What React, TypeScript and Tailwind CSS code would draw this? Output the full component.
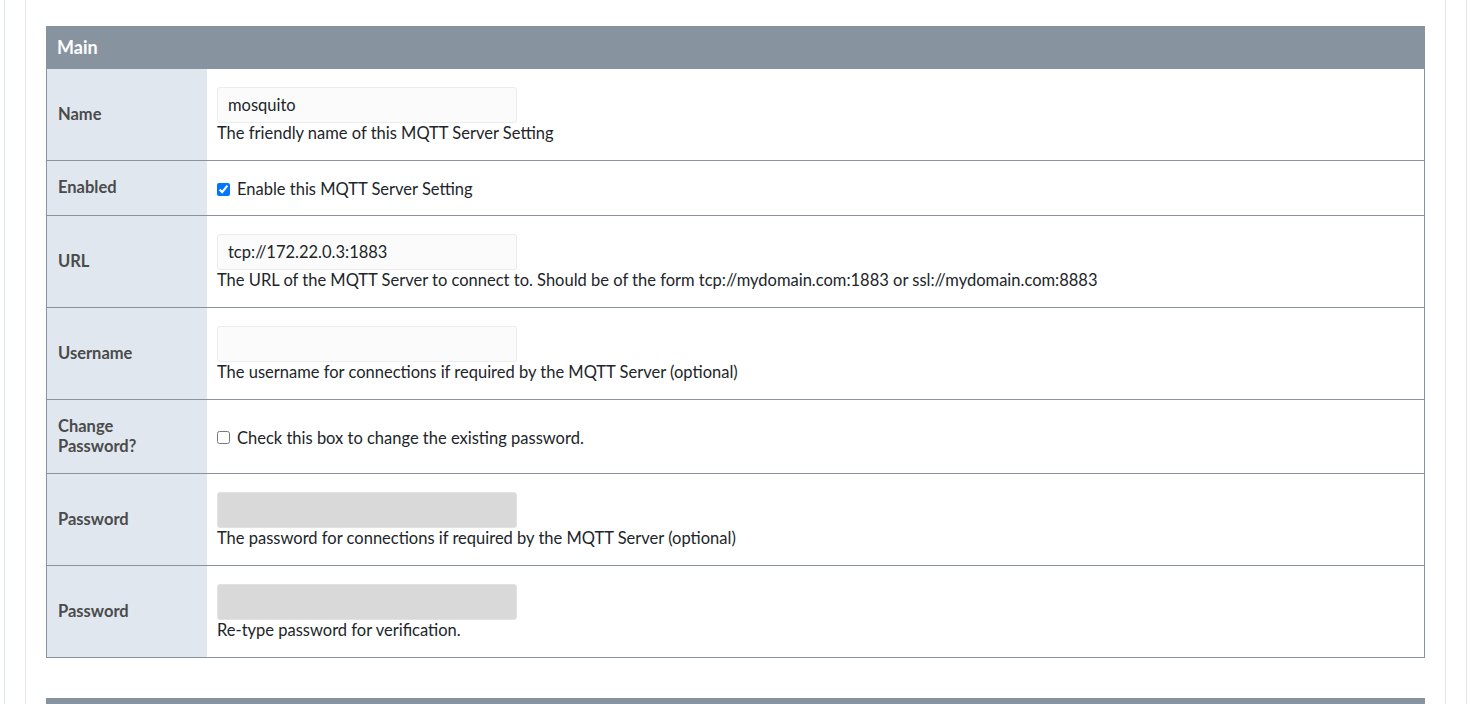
import React from "react";

type Row = {
  label: React.ReactNode;
  kind: "text" | "check" | "disabled";
  value?: string;
  help: string;
  checked?: boolean;
};

const rows: Row[] = [
  { label: "Name", kind: "text", value: "mosquito", help: "The friendly name of this MQTT Server Setting" },
  { label: "Enabled", kind: "check", checked: true, help: "Enable this MQTT Server Setting" },
  {
    label: "URL",
    kind: "text",
    value: "tcp://172.22.0.3:1883",
    help: "The URL of the MQTT Server to connect to. Should be of the form tcp://mydomain.com:1883 or ssl://mydomain.com:8883",
  },
  { label: "Username", kind: "text", value: "", help: "The username for connections if required by the MQTT Server (optional)" },
  { label: "Change Password?", kind: "check", checked: false, help: "Check this box to change the existing password." },
  { label: "Password", kind: "disabled", help: "The password for connections if required by the MQTT Server (optional)" },
  { label: "Password", kind: "disabled", help: "Re-type password for verification." },
];

const FieldRow = ({ row, last }: { row: Row; last: boolean }) => (
  <div className={`flex ${last ? "" : "border-b border-[#8a939c]"}`}>
    <div className="flex w-[160px] shrink-0 items-center bg-[#e0e7ef] py-[17px] pl-[11px] pr-[22px] font-bold leading-[19.5px] text-[#4b4b4b]">
      {row.label}
    </div>
    <div className="flex flex-1 flex-col justify-center px-[10px] pt-[18px] pb-[16px] text-[#212529]">
      {row.kind === "check" ? (
        <label className="flex items-center gap-[7px] leading-[20px]">
          <input type="checkbox" defaultChecked={row.checked} className="m-0 h-[13px] w-[13px] accent-[#0075ff]" />
          <span>{row.help}</span>
        </label>
      ) : (
        <>
          {row.kind === "text" ? (
            <input
              type="text"
              defaultValue={row.value}
              className="block h-[36px] w-[300px] rounded-[3px] border border-[#ececec] bg-[#fbfbfb] px-[10px] text-[#212529] outline-none"
            />
          ) : (
            <input
              type="password"
              disabled
              className="block h-[36px] w-[300px] rounded-[3px] border border-[#e2e2e2] bg-[#d9d9d9] outline-none"
            />
          )}
          <div className="leading-[21px]">{row.help}</div>
        </>
      )}
    </div>
  </div>
);

export default function App() {
  return (
    <div className="h-[704px] overflow-hidden bg-white pl-[4px] text-[16.5px] font-['Source_Sans_Pro','Lato',sans-serif]">
      <div className="h-full w-[1463px] border-x border-[#dde5ef] px-[20px]">
        <div className="h-full border-x border-[#e4e6ea] px-[20px] pt-[26px]">
          <div className="flex h-[43px] items-center bg-[#8893a0] px-[11px] text-[18px] font-bold text-white">Main</div>
          <div className="border-x border-b border-[#8a939c]">
            {rows.map((r, i) => (
              <FieldRow key={i} row={r} last={i === rows.length - 1} />
            ))}
          </div>
          <div className="mt-[40px] h-[43px] bg-[#8893a0]" />
        </div>
      </div>
    </div>
  );
}
